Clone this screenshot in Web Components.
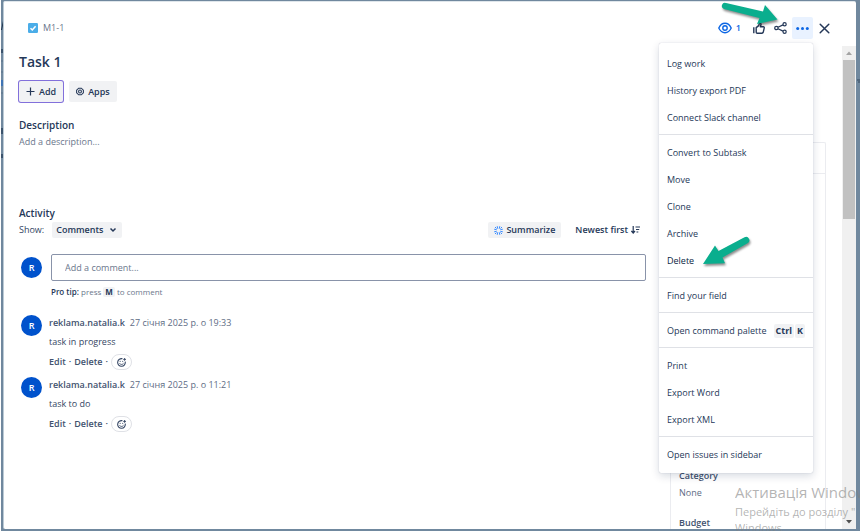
<!DOCTYPE html>
<html lang="uk">
<head>
<meta charset="utf-8">
<title>Task 1</title>
<style>
    html, body {
        height: 100%;
        margin: 0;
    }

    body {
        font-family: "Open Sans", "Noto Sans", sans-serif;
        font-size: 9px;
        line-height: 14px;
        color: #344563;
        overflow: hidden;
        --navy: #253858;
        --muted: #6b778c;
        --grey: #f1f2f4;
        --line: #dfe1e6;
        --blue: #0c66e4;
    }
</style>
</head>
<body>
<issue-dialog>
    <issue-header slot="header" key-text="M1-1" watchers="1">
        <action-menu>
            <menu-group>
                <menu-item>Log work</menu-item>
                <menu-item>History export PDF</menu-item>
                <menu-item>Connect Slack channel</menu-item>
            </menu-group>
            <menu-group>
                <menu-item>Convert to Subtask</menu-item>
                <menu-item>Move</menu-item>
                <menu-item>Clone</menu-item>
                <menu-item>Archive</menu-item>
                <menu-item active>Delete</menu-item>
            </menu-group>
            <menu-group>
                <menu-item>Find your field</menu-item>
            </menu-group>
            <menu-group>
                <menu-item>Open command palette<key-cap slot="keys">Ctrl</key-cap><key-cap slot="keys">K</key-cap></menu-item>
            </menu-group>
            <menu-group>
                <menu-item>Print</menu-item>
                <menu-item>Export Word</menu-item>
                <menu-item>Export XML</menu-item>
            </menu-group>
            <menu-group>
                <menu-item>Open issues in sidebar</menu-item>
            </menu-group>
        </action-menu>
    </issue-header>

    <issue-summary>
        <span slot="title">Task 1</span>
        <span slot="description">Add a description...</span>
    </issue-summary>
    <issue-activity>
        <issue-comment author="reklama.natalia.k" date="27 січня 2025 р. о 19:33">task in progress</issue-comment>
        <issue-comment author="reklama.natalia.k" date="27 січня 2025 р. о 11:21">task to do</issue-comment>
    </issue-activity>

    <details-panel slot="aside">
        <detail-field label="Category">None</detail-field>
        <detail-field label="Budget"></detail-field>
    </details-panel>
</issue-dialog>
<pointer-arrows></pointer-arrows>
<activation-notice></activation-notice>

<script>
    // Reset shared by every shadow root with buttons in it
    const buttonStyles = `
        button {
            font: inherit;
            color: inherit;
            border: 0;
            margin: 0;
            padding: 0;
            background: none;
            cursor: pointer;
        }

        svg {
            display: block;
            flex: none;
        }
    `;

    class IssueDialog extends HTMLElement {
        constructor() {
            super();
            this.attachShadow({ mode: 'open' });
            this.shadowRoot.innerHTML = `
                <style>
                    :host {
                        display: block;
                        position: relative;
                        box-sizing: border-box;
                        height: 100vh;
                        padding: 1px 4px 2px 2px;
                        border-left: 1px solid #fff;
                        background: #70889e;
                    }

                    .behind {
                        position: absolute;
                        top: 0;
                        height: 180px;
                        width: 3px;
                    }

                    .behind.left { left: 0; }
                    .behind.right { right: 0; }

                    .dialog {
                        position: relative;
                        box-sizing: border-box;
                        height: 100%;
                        display: flex;
                        flex-direction: column;
                        border-left: 1px solid #bccbd6;
                        border-top: 1px solid #dfe6eb;
                        border-radius: 2px;
                        background: #fff;
                    }

                    .body {
                        flex: 1;
                        min-height: 0;
                        display: flex;
                    }

                    .content {
                        flex: 1;
                        min-width: 0;
                        overflow: hidden;
                        display: grid;
                        grid-template-columns: minmax(0, 1fr) 156px;
                        gap: 24px;
                        padding: 0 16px 0 15px;
                    }
                </style>
                <svg class="behind left" viewBox="0 0 3 180">
                    <path d="M0 30L2 21V25L1 30z" fill="#1d3048"/>
                    <path d="M0 49h2v4H0zM0 128h2v6H0zM0 154h2v4H0z" fill="#3b526c"/>
                    <path d="M0 80h2v6H0z" fill="#3f74b5"/>
                    <path d="M0 61h3M0 72h3M0 93h3" stroke="#5b738a"/>
                </svg>
                <svg class="behind right" viewBox="0 0 3 180">
                    <path d="M0 80h3M1 82h2" stroke="#34495f"/>
                </svg>
                <div class="dialog">
                    <slot name="header"></slot>
                    <div class="body">
                        <div class="content">
                            <main><slot></slot></main>
                            <slot name="aside"></slot>
                        </div>
                        <scroll-track></scroll-track>
                    </div>
                </div>
            `;
        }
    }

    class ScrollTrack extends HTMLElement {
        constructor() {
            super();
            this.attachShadow({ mode: 'open' });
            this.shadowRoot.innerHTML = `
                <style>
                    :host {
                        display: flex;
                        flex-direction: column;
                        width: 14px;
                        background: #f0f0f0;
                    }

                    svg { display: block; }

                    .thumb {
                        height: 33%;
                        margin: 0 1px;
                        background: #c1c1c1;
                    }

                    .rest { flex: 1; }
                </style>
                <svg width="14" height="14" viewBox="0 0 14 14"><path d="M4 9l3-3.500 3 3.500z" fill="#a3a3a3"/></svg>
                <div class="thumb"></div>
                <div class="rest"></div>
                <svg width="14" height="14" viewBox="0 0 14 14"><path d="M4 5l3 3.500 3-3.500z" fill="#505050"/></svg>
            `;
        }
    }

    class IssueHeader extends HTMLElement {
        constructor() {
            super();
            this.attachShadow({ mode: 'open' });
            this.toggleMenu = this.toggleMenu.bind(this);
        }

        connectedCallback() {
            this.shadowRoot.innerHTML = `
                <style>
                    ${buttonStyles}

                    :host {
                        display: flex;
                        align-items: center;
                        justify-content: space-between;
                        padding: 15px 21px 7px 24px;
                        color: var(--navy);
                    }

                    .key, .tools, .watch {
                        display: flex;
                        align-items: center;
                    }

                    .key { gap: 5px; }

                    a {
                        color: var(--muted);
                        text-decoration: none;
                    }

                    .tools { gap: 1px; }

                    .tools button {
                        display: flex;
                        align-items: center;
                        justify-content: center;
                        width: 21px;
                        height: 22px;
                        border-radius: 2px;
                    }

                    .tools .watch {
                        width: auto;
                        gap: 4px;
                        padding: 0 6px;
                        color: var(--blue);
                        font-weight: 600;
                    }

                    .more { position: relative; }

                    .more > button {
                        background: #e9f2ff;
                        color: var(--blue);
                    }

                    .menu {
                        position: absolute;
                        top: calc(100% + 4px);
                        right: 0;
                        z-index: 10;
                    }

                    .menu[hidden] { display: none; }
                </style>
                <div class="key">
                    <svg width="10" height="10" viewBox="0 0 10 10">
                        <rect width="10" height="10" rx="1.200" fill="#4bade8"/>
                        <path d="M2.500 5.200l1.800 1.800L7.600 3.300" fill="none" stroke="#fff" stroke-width="1.500"/>
                    </svg>
                    <a href="#">${this.getAttribute('key-text')}</a>
                </div>
                <div class="tools">
                    <button class="watch" aria-label="Watch">
                        <svg width="14" height="12" viewBox="0 0 14 12" fill="none" stroke="currentColor" stroke-width="1.400">
                            <path d="M.8 6C2.200 2.900 4.400 1.300 7 1.300S11.800 2.900 13.200 6C11.800 9.100 9.600 10.700 7 10.700S2.200 9.100.8 6z"/>
                            <circle cx="7" cy="6" r="2.200"/>
                        </svg>
                        <span>${this.getAttribute('watchers')}</span>
                    </button>
                    <button aria-label="Vote">
                        <svg width="12" height="12" viewBox="0 0 12 12" fill="none" stroke="currentColor" stroke-width="1.400" stroke-linejoin="round">
                            <path d="M.8 5.300v5.900M3.200 5.600L5.700 3.600 6.500.9C7.700.9 8.200 1.900 7.900 3L7.400 4.800H10.300C11.100 4.800 11.400 5.400 11.200 6.100L10.200 10.300C10 10.900 9.600 11.200 9 11.200H4.200C3.500 11.200 3.200 10.800 3.200 10.200z"/>
                        </svg>
                    </button>
                    <button aria-label="Share">
                        <svg width="13" height="12" viewBox="0 0 13 12" fill="none" stroke="currentColor" stroke-width="1.200">
                            <circle cx="2.400" cy="6" r="1.700"/>
                            <circle cx="10.600" cy="2.200" r="1.600"/>
                            <circle cx="10.600" cy="9.800" r="1.600"/>
                            <path d="M4 5.300l5-2.400M4 6.700l5 2.400"/>
                        </svg>
                    </button>
                    <div class="more">
                        <button aria-label="Actions" aria-haspopup="true">
                            <svg width="13" height="3" viewBox="0 0 13 3" fill="currentColor">
                                <circle cx="1.700" cy="1.500" r="1.500"/>
                                <circle cx="6.500" cy="1.500" r="1.500"/>
                                <circle cx="11.300" cy="1.500" r="1.500"/>
                            </svg>
                        </button>
                        <div class="menu"><slot></slot></div>
                    </div>
                    <button aria-label="Close">
                        <svg width="11" height="11" viewBox="0 0 11 11" fill="none" stroke="currentColor" stroke-width="1.500" stroke-linecap="round">
                            <path d="M1.200 1.200l8.600 8.600M9.800 1.200l-8.600 8.600"/>
                        </svg>
                    </button>
                </div>
            `;

            this.shadowRoot.querySelector('.more > button').addEventListener('click', this.toggleMenu);
        }

        toggleMenu() {
            const menu = this.shadowRoot.querySelector('.menu');
            menu.hidden = !menu.hidden;
        }
    }

    class ActionMenu extends HTMLElement {
        constructor() {
            super();
            this.attachShadow({ mode: 'open' });
            this.shadowRoot.innerHTML = `
                <style>
                    :host {
                        display: block;
                        min-width: 154px;
                        padding: 3px 0 2px;
                        border-radius: 2px;
                        background: #fff;
                        box-shadow: 0 3px 8px rgba(9, 30, 66, 0.16), 0 0 1px rgba(9, 30, 66, 0.3);
                    }
                </style>
                <slot></slot>
            `;
        }
    }

    class MenuGroup extends HTMLElement {
        constructor() {
            super();
            this.attachShadow({ mode: 'open' });
            this.shadowRoot.innerHTML = `
                <style>
                    :host {
                        display: block;
                        padding: 4px 0 3px;
                        border-bottom: 1px solid var(--line);
                    }

                    :host(:last-child) { border-bottom: 0; }
                </style>
                <slot></slot>
            `;
        }
    }

    class MenuItem extends HTMLElement {
        constructor() {
            super();
            this.attachShadow({ mode: 'open' });
            this.shadowRoot.innerHTML = `
                <style>
                    ${buttonStyles}

                    :host { display: block; }

                    button {
                        display: flex;
                        align-items: center;
                        justify-content: space-between;
                        width: 100%;
                        height: 27px;
                        padding: 0 8px;
                        text-align: left;
                        white-space: nowrap;
                    }

                    :host([active]) button { color: #091e42; }

                    button:hover { background: var(--grey); }

                    .keys {
                        display: flex;
                        gap: 1px;
                    }
                </style>
                <button><span><slot></slot></span><span class="keys"><slot name="keys"></slot></span></button>
            `;
        }
    }

    class KeyCap extends HTMLElement {
        constructor() {
            super();
            this.attachShadow({ mode: 'open' });
            this.shadowRoot.innerHTML = `
                <style>
                    :host { display: inline-block; }

                    kbd {
                        display: block;
                        padding: 0 2px;
                        border-radius: 2px;
                        background: var(--grey);
                        color: var(--navy);
                        font: inherit;
                        font-weight: 700;
                    }

                    :host([small]) kbd { line-height: 10px; }
                </style>
                <kbd><slot></slot></kbd>
            `;
        }
    }

    class IssueSummary extends HTMLElement {
        constructor() {
            super();
            this.attachShadow({ mode: 'open' });
            this.shadowRoot.innerHTML = `
                <style>
                    ${buttonStyles}

                    :host {
                        display: block;
                        padding-top: 6px;
                        color: var(--navy);
                    }

                    h1 {
                        margin: 0;
                        font-size: 14px;
                        line-height: 20px;
                        font-weight: 600;
                    }

                    .buttons {
                        display: flex;
                        gap: 6px;
                        margin-top: 9px;
                    }

                    button {
                        display: flex;
                        align-items: center;
                        gap: 4px;
                        height: 21px;
                        padding: 0 7px;
                        border-radius: 2px;
                        background: var(--grey);
                        font-weight: 600;
                    }

                    .add { box-shadow: 0 0 0 1px #8270db; }

                    h2 {
                        margin: 16px 0 3px;
                        font-size: 10px;
                        line-height: 14px;
                        font-weight: 600;
                    }

                    p {
                        margin: 0;
                        color: var(--muted);
                    }
                </style>
                <h1><slot name="title"></slot></h1>
                <div class="buttons">
                    <button class="add">
                        <svg width="9" height="9" viewBox="0 0 9 9" stroke="currentColor" stroke-width="1.200"><path d="M4.500 .5v8M.5 4.500h8"/></svg>
                        Add
                    </button>
                    <button>
                        <svg width="8" height="9" viewBox="0 0 9 9" fill="none" stroke="currentColor">
                            <path d="M3 .8h3L8.300 3v3L6 8.200H3L.7 6V3z" stroke-width="1.200"/>
                            <circle cx="4.500" cy="4.500" r="1.600" stroke-width="1.200"/>
                        </svg>
                        Apps
                    </button>
                </div>
                <h2>Description</h2>
                <p><slot name="description"></slot></p>
            `;
        }
    }

    class UserAvatar extends HTMLElement {
        constructor() {
            super();
            this.attachShadow({ mode: 'open' });
            this.shadowRoot.innerHTML = `
                <style>
                    :host {
                        display: flex;
                        flex: none;
                        align-items: center;
                        justify-content: center;
                        width: 21px;
                        height: 21px;
                        border-radius: 50%;
                        background: #0052cc;
                        color: #fff;
                        font-weight: 600;
                    }
                </style>
                <slot></slot>
            `;
        }
    }

    class IssueActivity extends HTMLElement {
        constructor() {
            super();
            this.attachShadow({ mode: 'open' });
            this.shadowRoot.innerHTML = `
                <style>
                    ${buttonStyles}

                    :host {
                        display: block;
                        margin-top: 57px;
                    }

                    h2 {
                        margin: 0 0 2px;
                        font-size: 10px;
                        line-height: 14px;
                        font-weight: 600;
                        color: var(--navy);
                    }

                    .bar, .show, .sort, .bar button {
                        display: flex;
                        align-items: center;
                    }

                    .bar { justify-content: space-between; }

                    .show { gap: 8px; }

                    .sort { gap: 8px; }

                    .bar button, select {
                        height: 16px;
                        border: 0;
                        border-radius: 2px;
                        font: inherit;
                        font-weight: 600;
                        color: var(--navy);
                    }

                    .bar button {
                        gap: 3px;
                        padding: 0 6px;
                    }

                    .bar .grey, select { background: var(--grey); }

                    .pick { position: relative; }

                    select {
                        display: block;
                        appearance: none;
                        padding: 0 18px 0 4px;
                    }

                    .pick svg {
                        position: absolute;
                        right: 5px;
                        top: 5px;
                        pointer-events: none;
                    }

                    .composer {
                        display: flex;
                        align-items: center;
                        gap: 9px;
                        margin-top: 16px;
                        padding-left: 2px;
                    }

                    input {
                        flex: 1;
                        min-width: 0;
                        box-sizing: border-box;
                        height: 27px;
                        margin: 0;
                        padding: 0 13px;
                        border: 1px solid #8993a9;
                        border-radius: 2px;
                        font: inherit;
                        color: inherit;
                    }

                    input::placeholder { color: var(--muted); }

                    .tip {
                        margin: 4px 0 16px 32px;
                        font-size: 8px;
                        color: var(--muted);
                    }

                    .tip b {
                        font-weight: 600;
                        color: var(--navy);
                    }

                    .comments {
                        display: flex;
                        flex-direction: column;
                        gap: 7px;
                        padding-left: 2px;
                    }
                </style>
                <h2>Activity</h2>
                <div class="bar">
                    <div class="show">
                        <label for="filter">Show:</label>
                        <div class="pick">
                            <select id="filter"><option>Comments</option></select>
                            <svg width="8" height="6" viewBox="0 0 8 6" fill="none" stroke="#253858" stroke-width="1.500"><path d="M1.500 1.500L4 4l2.500-2.500"/></svg>
                        </div>
                    </div>
                    <div class="sort">
                        <button class="grey">
                            <svg width="9" height="9" viewBox="0 0 9 9" stroke="#388bff" stroke-width="1" fill="none">
                                <path d="M3.200.2L3.700 2.700M5.800.2L5.300 2.700M3.700 6.300L3.200 8.800M5.300 6.300L5.800 8.800M.2 3.200L2.700 3.700M.2 5.800L2.700 5.300M6.300 3.700L8.800 3.200M6.300 5.300L8.800 5.800M1 1L2.500 2.500M8 1L6.500 2.500M1 8L2.500 6.500M8 8L6.500 6.500"/>
                            </svg>
                            Summarize
                        </button>
                        <button>
                            Newest first
                            <svg width="9" height="8" viewBox="0 0 9 8" fill="none" stroke="currentColor" stroke-width="1.200">
                                <path d="M2.200 0v7M.4 5l1.800 2L4 5M4.500 1H9M5 3.500h3.200M5.500 6h1.800"/>
                            </svg>
                        </button>
                    </div>
                </div>
                <div class="composer">
                    <user-avatar>R</user-avatar>
                    <input type="text" placeholder="Add a comment..." aria-label="Add a comment">
                </div>
                <div class="tip"><b>Pro tip:</b> press <key-cap small>M</key-cap> to comment</div>
                <div class="comments"><slot></slot></div>
            `;
        }
    }

    class IssueComment extends HTMLElement {
        constructor() {
            super();
            this.attachShadow({ mode: 'open' });
        }

        connectedCallback() {
            this.shadowRoot.innerHTML = `
                <style>
                    ${buttonStyles}

                    :host {
                        display: flex;
                        gap: 7px;
                    }

                    .body {
                        display: flex;
                        flex-direction: column;
                        gap: 5px;
                        padding-top: 1px;
                    }

                    .meta {
                        display: flex;
                        gap: 5px;
                        color: #5e6c84;
                    }

                    .meta b, .actions {
                        font-weight: 600;
                        color: #42526e;
                    }

                    .actions {
                        display: flex;
                        align-items: center;
                        gap: 3px;
                    }

                    .react {
                        display: flex;
                        align-items: center;
                        justify-content: center;
                        box-sizing: border-box;
                        width: 21px;
                        height: 16px;
                        border: 1px solid var(--line);
                        border-radius: 8px;
                    }
                </style>
                <user-avatar>R</user-avatar>
                <div class="body">
                    <div class="meta"><b>${this.getAttribute('author')}</b><span>${this.getAttribute('date')}</span></div>
                    <div><slot></slot></div>
                    <div class="actions">
                        <button>Edit</button>
                        <span>·</span>
                        <button>Delete</button>
                        <span>·</span>
                        <button class="react" aria-label="Add reaction">
                            <svg width="9" height="9" viewBox="0 0 9 9" fill="none" stroke="#344563">
                                <path d="M5.500 .8A3.800 3.800 0 1 0 8.200 3.700" stroke-width="1.100"/>
                                <path d="M2.500 5.300c.8 1.500 3.200 1.500 4 0" stroke-width=".9"/>
                                <path d="M3.200 2.900v1M5.700 2.900v1M7.600 0v2.800M6.200 1.400H9" stroke-width=".9"/>
                            </svg>
                        </button>
                    </div>
                </div>
            `;
        }
    }

    class DetailsPanel extends HTMLElement {
        constructor() {
            super();
            this.attachShadow({ mode: 'open' });
            this.shadowRoot.innerHTML = `
                <style>
                    :host {
                        display: block;
                        margin-top: 96px;
                        border: 1px solid #ebecf0;
                        border-bottom: 0;
                        border-radius: 2px 2px 0 0;
                    }

                    .head {
                        height: 30px;
                        border-bottom: 1px solid #ebecf0;
                    }

                    .fields {
                        display: flex;
                        flex-direction: column;
                        gap: 16px;
                        padding: 295px 8px 0;
                    }
                </style>
                <div class="head"></div>
                <div class="fields"><slot></slot></div>
            `;
        }
    }

    class DetailField extends HTMLElement {
        constructor() {
            super();
            this.attachShadow({ mode: 'open' });
        }

        connectedCallback() {
            this.shadowRoot.innerHTML = `
                <style>
                    :host {
                        display: flex;
                        flex-direction: column;
                        gap: 3px;
                        color: #5e6c84;
                    }

                    b {
                        font-weight: 600;
                        color: #42526e;
                    }
                </style>
                <b>${this.getAttribute('label')}</b>
                <span><slot></slot></span>
            `;
        }
    }

    // Green arrows lying over the dialog
    class PointerArrows extends HTMLElement {
        constructor() {
            super();
            this.attachShadow({ mode: 'open' });
            this.shadowRoot.innerHTML = `
                <style>
                    :host {
                        position: absolute;
                        top: 0;
                        right: 0;
                        z-index: 20;
                        pointer-events: none;
                    }

                    svg {
                        display: block;
                        filter: drop-shadow(1px 2px 1px rgba(0, 0, 0, 0.45));
                    }
                </style>
                <svg width="160" height="280" viewBox="700 0 160 280" fill="#0aae8e">
                    <path d="M726 3L763 11.500 765 5 777.500 19.500 757 24 759.500 18 724 9A3 3 0 0 1 726 3z"/>
                    <path d="M744.500 237.200L718.500 251 715 245.500 703 264 725 263.300 722.500 257.500 747.500 243.200A3.300 3.300 0 0 0 744.500 237.200z"/>
                </svg>
            `;
        }
    }

    class ActivationNotice extends HTMLElement {
        constructor() {
            super();
            this.attachShadow({ mode: 'open' });
            this.shadowRoot.innerHTML = `
                <style>
                    :host {
                        position: absolute;
                        right: 0;
                        bottom: 0;
                        z-index: 30;
                        width: 125px;
                        height: 49px;
                        overflow: hidden;
                        white-space: nowrap;
                        pointer-events: none;
                        color: rgba(130, 130, 130, 0.6);
                        font-size: 11px;
                        line-height: 16px;
                    }

                    .title {
                        font-size: 15px;
                        line-height: 20px;
                        margin-bottom: 2px;
                    }
                </style>
                <div class="title">Активація Windows</div>
                <div>Перейдіть до розділу "</div>
                <div>Windows.</div>
            `;
        }
    }

    customElements.define('issue-dialog', IssueDialog);
    customElements.define('scroll-track', ScrollTrack);
    customElements.define('issue-header', IssueHeader);
    customElements.define('action-menu', ActionMenu);
    customElements.define('menu-group', MenuGroup);
    customElements.define('menu-item', MenuItem);
    customElements.define('key-cap', KeyCap);
    customElements.define('issue-summary', IssueSummary);
    customElements.define('user-avatar', UserAvatar);
    customElements.define('issue-activity', IssueActivity);
    customElements.define('issue-comment', IssueComment);
    customElements.define('details-panel', DetailsPanel);
    customElements.define('detail-field', DetailField);
    customElements.define('pointer-arrows', PointerArrows);
    customElements.define('activation-notice', ActivationNotice);
</script>
</body>
</html>
